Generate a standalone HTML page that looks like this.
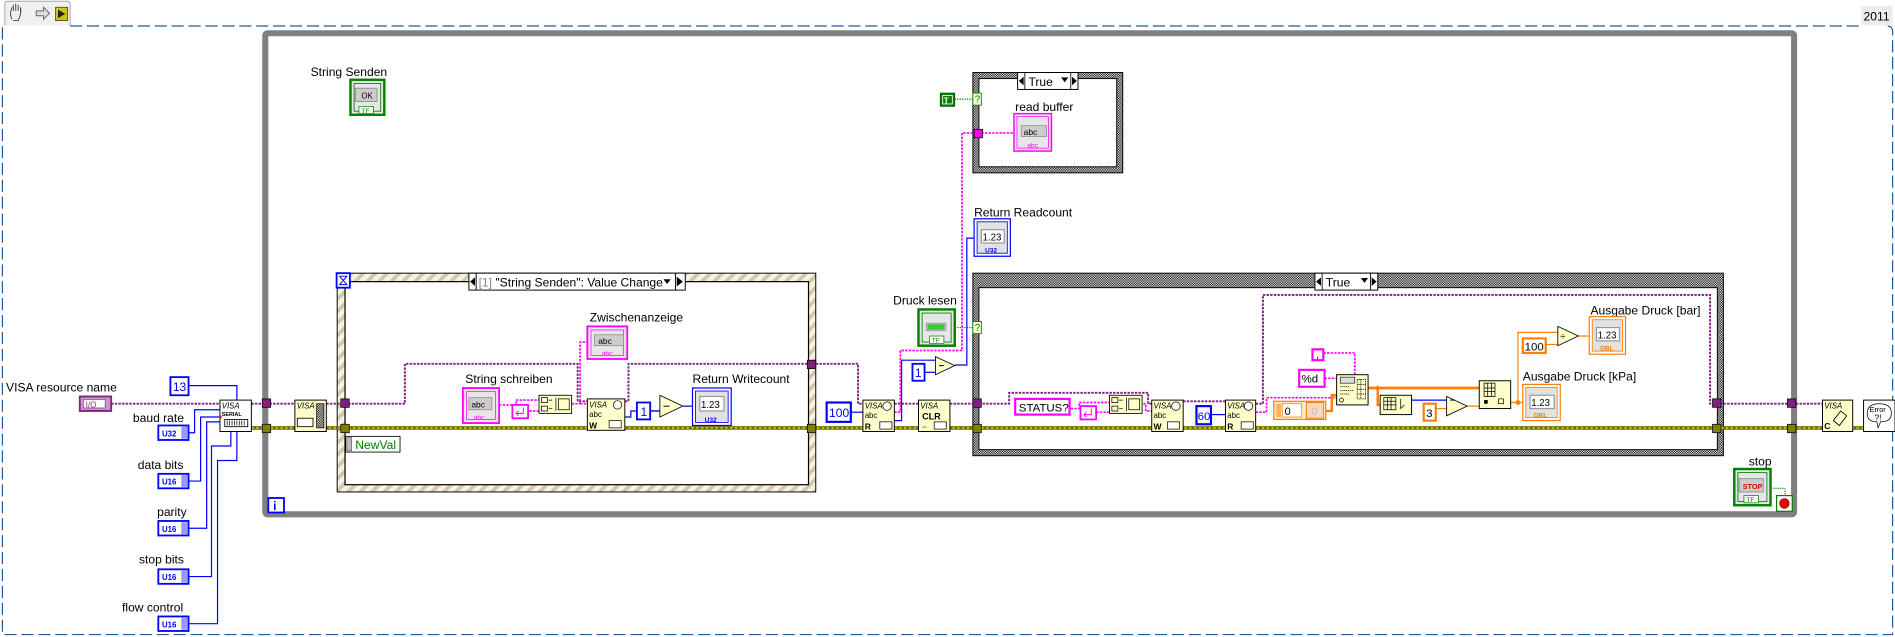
<!DOCTYPE html>
<html><head><meta charset="utf-8"><style>
html,body{margin:0;padding:0;background:#fff;overflow:hidden}
svg{display:block}
text{font-family:"Liberation Sans",sans-serif}
</style></head><body>
<svg width="1895" height="637" viewBox="0 0 1568 527" preserveAspectRatio="none" xmlns="http://www.w3.org/2000/svg">
<defs>
<pattern id="chk" width="2" height="2" patternUnits="userSpaceOnUse"><rect width="2" height="2" fill="#fff"/><rect width="1" height="1" fill="#000"/><rect x="1" y="1" width="1" height="1" fill="#000"/></pattern>
<pattern id="str" width="7" height="7" patternUnits="userSpaceOnUse" patternTransform="rotate(45)"><rect width="7" height="7" fill="#f6f3e2"/><rect width="3" height="7" fill="#cfc9aa"/></pattern>
</defs>
<rect width="1568" height="527" fill="#fff"/>

<!-- toolbar tab -->
<path d="M4,21 V3 Q4,1 6,1 H56 Q58,1 58,3 V21" fill="#f0f0f0" stroke="#a8a8a8" stroke-width="0.8"/>
<g fill="none" stroke="#444" stroke-width="0.8">
<path d="M10,16 Q8,12 9,9 L10,6 M11,9 V4 M13,9 V3 M15,9 V4 M17,10 V6 Q18,12 15,17 H11"/>
</g>
<path d="M30,9 H36 V6 L41,11 L36,16 V13 H30 Z" fill="#ddd" stroke="#666" stroke-width="0.8"/>
<rect x="46" y="6" width="10" height="11" fill="#c8c800" stroke="#333" stroke-width="0.6"/>
<path d="M48,8 L54,11.5 L48,15 Z" fill="#222"/>
<!-- 2011 tag -->
<rect x="1540" y="5" width="26" height="16" fill="#ececec"/>
<text x="1542" y="17" font-size="10">2011</text>
<!-- dashed border -->
<path d="M58,21.5 H1540 M1562,21.5 Q1566,22 1566,26 V525 H2 V21.5 H4" fill="none" stroke="#1f5d9a" stroke-width="1" stroke-dasharray="10,4"/>

<!-- while loop -->
<rect x="219.5" y="27.5" width="1265" height="398" fill="none" stroke="#808080" stroke-width="5" rx="2"/>
<rect x="222" y="412" width="13" height="12" fill="#fff" stroke="#00f" stroke-width="1.5"/>
<text x="226" y="422" font-size="10" fill="#00f" font-weight="bold">i</text>

<!-- event structure -->
<rect x="279" y="226" width="396" height="181" fill="url(#str)" stroke="#000" stroke-width="0.8"/>
<rect x="285.5" y="233" width="383.5" height="168" fill="#fff" stroke="#000" stroke-width="1"/>
<rect x="278.5" y="226" width="11" height="12" fill="#fff" stroke="#00f" stroke-width="1.5"/>
<path d="M281,228.5 H287 L284,232 L287,235.5 H281 L284,232 Z" fill="none" stroke="#00f" stroke-width="0.8"/>
<rect x="388" y="226" width="179" height="14" fill="#fff" stroke="#000" stroke-width="0.8"/>
<path d="M389,233 L393,229.5 V236.5 Z" fill="#000"/>
<path d="M394,226 V240 M559,226 V240" stroke="#000" stroke-width="0.8"/>
<text x="396" y="237" font-size="10"><tspan fill="#888">[1]</tspan> "String Senden": Value Change</text>
<path d="M549,231 H555 L552,235 Z" fill="#000"/>
<path d="M560,229 L565,233 L560,237 Z" fill="#000"/>
<rect x="286" y="361" width="45" height="13" fill="#fff" stroke="#000" stroke-width="0.7"/>
<rect x="287" y="362" width="4" height="11" fill="#bbb" stroke="#555" stroke-width="0.5"/>
<text x="294" y="371.5" font-size="10" fill="#008000">NewVal</text>

<!-- case structure 1 -->
<rect x="805" y="60" width="124" height="83" fill="url(#chk)" stroke="#000" stroke-width="0.8"/>
<rect x="810" y="65" width="114" height="73" fill="#fff" stroke="#000" stroke-width="0.8"/>
<rect x="842" y="60" width="50" height="14" fill="#fff" stroke="#000" stroke-width="0.8"/>
<path d="M843,67 L847,63.5 V70.5 Z M891,67 L887,63.5 V70.5 Z M884,64 H878 L881,68 Z" fill="#000"/>
<path d="M848,60 V74 M886,60 V74" stroke="#000" stroke-width="0.7"/>
<text x="851" y="71" font-size="10">True</text>

<!-- case structure 2 -->
<rect x="805" y="226" width="621" height="151" fill="url(#chk)" stroke="#000" stroke-width="0.8"/>
<rect x="810" y="238" width="611" height="134" fill="#fff" stroke="#000" stroke-width="0.8"/>
<rect x="1088" y="226" width="52" height="14" fill="#fff" stroke="#000" stroke-width="0.8"/>
<path d="M1089,233 L1093,229.5 V236.5 Z M1139,233 L1135,229.5 V236.5 Z M1132,230 H1126 L1129,234 Z" fill="#000"/>
<path d="M1094,226 V240 M1134,226 V240" stroke="#000" stroke-width="0.7"/>
<text x="1097" y="237" font-size="10">True</text>

<!-- ===== wires ===== -->
<!-- error cluster -->
<g fill="none">
<path d="M208,354 H1542" stroke="#6b6b00" stroke-width="3"/>
<path d="M208,354 H1542" stroke="#f2f200" stroke-width="1" stroke-dasharray="2,2"/>
</g>
<!-- VISA purple -->
<g fill="none" stroke="#7f1f7f" stroke-width="1.6" stroke-dasharray="2,1">
<path d="M92,334 H182"/>
<path d="M208,334 H244"/>
<path d="M270,334 H335 V301 H478 V332 H486"/>
<path d="M517,332 H520 V301 H710 V334 H714"/>
<path d="M740,334 H760"/>
<path d="M786,334 H835 V325 H950 V334 H953"/>
<path d="M973,332 H1014"/>
<path d="M1039,334 H1045 V244 H1415 V334 H1508"/>
</g>
<!-- blue ints -->
<g fill="none" stroke="#0000ff" stroke-width="1">
<path d="M156,319 H196 V331"/>
<path d="M156,358 H161 V339 H182"/>
<path d="M156,398 H166 V345 H182"/>
<path d="M156,437 H171 V349 H182"/>
<path d="M156,477 H175 V369 H191 V357"/>
<path d="M156,516 H180 V381 H196 V357"/>
<path d="M517,345 H522 V340 H546"/>
<path d="M538,340 H546"/>
<path d="M565,336 H573"/>
<path d="M704,341 H714"/>
<path d="M740,348 H746 V298 H774"/>
<path d="M765,308 H774"/>
<path d="M790,302 H800 V197 H806"/>
<path d="M1002,343 H1014"/>
<path d="M1168,331 H1197"/>
</g>
<!-- pink strings -->
<g fill="none" stroke="#ff00ff" stroke-width="1.4" stroke-dasharray="2,1">
<path d="M413,335 H427 V331 H446"/>
<path d="M438,340 H446"/>
<path d="M473,334 H480 V283 H486"/>
<path d="M480,334 H486"/>
<path d="M740,341 H745 V290 H796 V110 H839"/>
<path d="M886,338 H893 V333 H918"/>
<path d="M907,341 H918"/>
<path d="M934,334 H948 V340 H953"/>
<path d="M1039,341 H1048 V329 H1106"/>
<path d="M1096,313 H1106"/>
<path d="M1095,292 H1121 V310"/>
</g>
<!-- green booleans -->
<g fill="none" stroke="#008000" stroke-width="1" stroke-dasharray="1,1">
<path d="M790,82 H806"/>
<path d="M790,271 H806"/>
<path d="M1465,404 H1477 V410"/>
</g>
<!-- orange -->
<g fill="none" stroke="#ff7f00">
<path d="M1097,340 H1102 V327 H1106" stroke-width="2"/>
<path d="M1132,321 H1224" stroke-width="2.2"/>
<path d="M1140,321 V335 H1142" stroke-width="2"/>
<path d="M1188,338 H1197" stroke-width="1"/>
<path d="M1214,336 H1224" stroke-width="1"/>
<path d="M1250,333 H1260" stroke-width="1"/>
<path d="M1256,333 V275 H1289" stroke-width="1"/>
<path d="M1279,285 H1289" stroke-width="1"/>
<path d="M1306,278 H1315" stroke-width="1"/>
</g>
<circle cx="1140" cy="321" r="1.8" fill="#ff7f00"/>
<circle cx="1256" cy="333" r="2" fill="#ff7f00"/>

<!-- tunnels -->
<g stroke="#000" stroke-width="0.6">
<rect x="217" y="330" width="7" height="7" fill="#7f1f7f"/>
<rect x="217" y="351" width="7" height="7" fill="#808000"/>
<rect x="282" y="330" width="7" height="7" fill="#7f1f7f"/>
<rect x="282" y="351" width="7" height="7" fill="#808000"/>
<rect x="668" y="298" width="7" height="7" fill="#7f1f7f"/>
<rect x="668" y="351" width="7" height="7" fill="#808000"/>
<rect x="805" y="330" width="7" height="7" fill="#7f1f7f"/>
<rect x="805" y="351" width="7" height="7" fill="#808000"/>
<rect x="806" y="107" width="7" height="7" fill="#ff00ff"/>
<rect x="1417" y="330" width="7" height="7" fill="#7f1f7f"/>
<rect x="1417" y="351" width="7" height="7" fill="#808000"/>
<rect x="1479" y="330" width="7" height="7" fill="#7f1f7f"/>
<rect x="1479" y="351" width="7" height="7" fill="#808000"/>
</g>
<!-- selector terminals -->
<rect x="805" y="77" width="7" height="10" fill="#f4ffd0" stroke="#008000" stroke-width="0.7"/>
<text x="806.5" y="85" font-size="8" fill="#008000">?</text>
<rect x="805" y="266" width="7" height="10" fill="#f4ffd0" stroke="#008000" stroke-width="0.7"/>
<text x="806.5" y="274" font-size="8" fill="#008000">?</text>

<!-- ===== left controls ===== -->
<g font-size="10">
<text x="5" y="324">VISA resource name</text>
<text x="110" y="349">baud rate</text>
<text x="114" y="388">data bits</text>
<text x="130" y="427">parity</text>
<text x="115" y="466">stop bits</text>
<text x="101" y="506">flow control</text>
</g>
<rect x="66" y="328" width="26" height="12" fill="#c49ac4" stroke="#7f1f7f" stroke-width="1.5"/>
<rect x="69" y="330.5" width="18" height="7" fill="#fff" stroke="#7f1f7f" stroke-width="0.5"/>
<text x="71" y="337" font-size="6.5" fill="#7f1f7f">I/O</text>
<rect x="141" y="312" width="15" height="15" fill="#fff" stroke="#00f" stroke-width="1.5"/>
<text x="143" y="323.5" font-size="10" fill="#00f">13</text>
<g font-size="6.5" font-weight="bold" fill="#00f">
<rect x="131" y="352" width="25" height="12" fill="#fff" stroke="#00f" stroke-width="1.5"/><rect x="150" y="353" width="5" height="10" fill="#99f"/><text x="134" y="361">U32</text>
<rect x="131" y="392" width="25" height="12" fill="#fff" stroke="#00f" stroke-width="1.5"/><rect x="150" y="393" width="5" height="10" fill="#99f"/><text x="134" y="401">U16</text>
<rect x="131" y="431" width="25" height="12" fill="#fff" stroke="#00f" stroke-width="1.5"/><rect x="150" y="432" width="5" height="10" fill="#99f"/><text x="134" y="440">U16</text>
<rect x="131" y="471" width="25" height="12" fill="#fff" stroke="#00f" stroke-width="1.5"/><rect x="150" y="472" width="5" height="10" fill="#99f"/><text x="134" y="480">U16</text>
<rect x="131" y="510" width="25" height="12" fill="#fff" stroke="#00f" stroke-width="1.5"/><rect x="150" y="511" width="5" height="10" fill="#99f"/><text x="134" y="519">U16</text>
</g>

<!-- VISA serial config -->
<rect x="182" y="331" width="26" height="26" fill="#fff" stroke="#000" stroke-width="0.8"/>
<text x="183.5" y="338" font-size="6.5" font-style="italic">VISA</text>
<text x="183.5" y="344" font-size="4.5" font-weight="bold">SERIAL</text>
<rect x="186" y="347" width="19" height="6" fill="#fff" stroke="#000" stroke-width="0.7"/>
<path d="M188,348 V352 M190,348 V352 M192,348 V352 M194,348 V352 M196,348 V352 M198,348 V352 M200,348 V352 M202,348 V352" stroke="#000" stroke-width="0.6"/>
<circle cx="182.5" cy="345" r="1" fill="#f00"/>

<!-- VISA config/timeout node -->
<rect x="244" y="331" width="26" height="26" fill="#ffffcc" stroke="#000" stroke-width="0.8"/>
<text x="245.5" y="338" font-size="6.5" font-style="italic">VISA</text>
<rect x="246" y="346" width="13" height="7" fill="#fff" stroke="#000" stroke-width="0.7"/>
<rect x="262" y="334" width="6" height="20" fill="url(#chk)" stroke="#000" stroke-width="0.6"/>

<!-- String Senden control -->
<text x="257" y="63" font-size="10">String Senden</text>
<rect x="290" y="66" width="28" height="29" fill="#e6e6e6" stroke="#008000" stroke-width="2"/>
<rect x="293" y="69" width="22" height="23" fill="none" stroke="#008000" stroke-width="0.7"/>
<rect x="294" y="73" width="18" height="11" fill="#ccc" stroke="#888" stroke-width="0.7"/>
<text x="299" y="81.5" font-size="6.5">OK</text>
<rect x="297" y="88" width="12" height="6" fill="#fff" stroke="#008000" stroke-width="0.6"/>
<text x="299" y="93.5" font-size="5.5" fill="#008000">TF</text>

<!-- Zwischenanzeige -->
<text x="488" y="266" font-size="10">Zwischenanzeige</text>
<rect x="486" y="270" width="33" height="27" fill="#e6e6e6" stroke="#ff00ff" stroke-width="1.5"/>
<rect x="489" y="273" width="27" height="21" fill="none" stroke="#ff00ff" stroke-width="0.6"/>
<rect x="492" y="277" width="24" height="9" fill="#ccc" stroke="#888" stroke-width="0.6"/>
<text x="495" y="284.5" font-size="7">abc</text>
<text x="498" y="294" font-size="5.5" fill="#ff00ff">abc</text>

<!-- String schreiben -->
<text x="385" y="317" font-size="10">String schreiben</text>
<rect x="383" y="321" width="30" height="29" fill="#e6e6e6" stroke="#ff00ff" stroke-width="1.5"/>
<rect x="386" y="324" width="24" height="23" fill="none" stroke="#ff00ff" stroke-width="0.6"/>
<rect x="388" y="329" width="19" height="10" fill="#ccc" stroke="#888" stroke-width="0.6"/>
<text x="390" y="337" font-size="7">abc</text>
<text x="392" y="347" font-size="5.5" fill="#ff00ff">abc</text>
<!-- CR const -->
<rect x="424" y="335" width="13" height="11" fill="#fff" stroke="#ff00ff" stroke-width="1.5"/>
<path d="M433,337 V342 H427 M429,340 L427,342 L429,344" fill="none" stroke="#ff00ff" stroke-width="0.8"/>
<!-- concat -->
<rect x="446" y="327" width="27" height="15" fill="#ffffcc" stroke="#000" stroke-width="0.7"/>
<path d="M448,329 h5 v4 h-5 z M448,336 h5 v4 h-5 z M454,331 h3 M454,338 h3 M460,329 V340 M462,330 h9 v9 h-9 z" fill="none" stroke="#000" stroke-width="0.6"/>
<!-- VISA write -->
<rect x="486" y="330" width="31" height="26" fill="#ffffcc" stroke="#000" stroke-width="0.8"/>
<text x="487.5" y="337" font-size="6.5" font-style="italic">VISA</text>
<text x="487.5" y="345" font-size="6.5">abc</text>
<text x="487.5" y="354.5" font-size="7" font-weight="bold">W</text>
<rect x="504" y="348" width="10" height="6" fill="#fff" stroke="#000" stroke-width="0.6"/>
<circle cx="511" cy="335" r="3.5" fill="#fff" stroke="#000" stroke-width="0.6"/>
<!-- 1 const & subtract -->
<rect x="527" y="333" width="11" height="14" fill="#fff" stroke="#00f" stroke-width="1.5"/>
<text x="530" y="344" font-size="10" fill="#00f">1</text>
<path d="M546,327 L565,336 L546,345 Z" fill="#ffffcc" stroke="#000" stroke-width="0.7"/>
<path d="M549,336 h5" stroke="#000" stroke-width="0.8"/>
<!-- Return Writecount -->
<text x="573" y="317" font-size="10">Return Writecount</text>
<rect x="573" y="321" width="32" height="31" fill="#fff" stroke="#00f" stroke-width="1"/>
<rect x="575.5" y="323.5" width="27" height="26" fill="#e2e2e2" stroke="#00f" stroke-width="0.7"/>
<rect x="579" y="328" width="20" height="12" fill="#fff" stroke="#999" stroke-width="1"/>
<text x="580" y="337.5" font-size="8">1.23</text>
<text x="583" y="349" font-size="5.5" fill="#00f" font-weight="bold">U32</text>

<!-- 100 const -->
<rect x="684" y="333" width="20" height="16" fill="#fff" stroke="#00f" stroke-width="1.8"/>
<text x="686" y="345" font-size="10" fill="#00f">100</text>
<!-- VISA read -->
<rect x="714" y="331" width="26" height="26" fill="#ffffcc" stroke="#000" stroke-width="0.8"/>
<text x="715.5" y="338" font-size="6.5" font-style="italic">VISA</text>
<text x="715.5" y="346" font-size="6.5">abc</text>
<text x="715.5" y="355.5" font-size="7" font-weight="bold">R</text>
<rect x="728" y="349" width="10" height="6" fill="#fff" stroke="#000" stroke-width="0.6"/>
<circle cx="734" cy="336" r="3.5" fill="#fff" stroke="#000" stroke-width="0.6"/>
<!-- VISA CLR -->
<rect x="760" y="331" width="26" height="26" fill="#ffffcc" stroke="#000" stroke-width="0.8"/>
<text x="761.5" y="338" font-size="6.5" font-style="italic">VISA</text>
<text x="763" y="347" font-size="7.5" font-weight="bold">CLR</text>
<rect x="773" y="349" width="10" height="6" fill="#fff" stroke="#000" stroke-width="0.6"/>
<text x="762" y="355" font-size="6">⇔</text>

<!-- Druck lesen -->
<text x="739" y="252" font-size="10">Druck lesen</text>
<rect x="760" y="256" width="30" height="30" fill="#e6e6e6" stroke="#008000" stroke-width="2"/>
<rect x="763" y="259" width="24" height="24" fill="none" stroke="#008000" stroke-width="0.7"/>
<rect x="766" y="267" width="17" height="7" fill="#aaa"/>
<rect x="768" y="268.5" width="13" height="4" fill="#3c3"/>
<rect x="769" y="278" width="12" height="6" fill="#fff" stroke="#008000" stroke-width="0.6"/>
<text x="771" y="283.5" font-size="5.5" fill="#008000">TF</text>
<!-- 1 const subtract -->
<rect x="755" y="301" width="10" height="14" fill="#fff" stroke="#00f" stroke-width="1.5"/>
<text x="757" y="312" font-size="10" fill="#00f">1</text>
<path d="M774,295 L790,302.5 L774,310 Z" fill="#ffffcc" stroke="#000" stroke-width="0.7"/>
<path d="M777,302.5 h4" stroke="#000" stroke-width="0.8"/>

<!-- T const -->
<rect x="778" y="77" width="12" height="11" fill="#008000" stroke="#005000" stroke-width="0.6"/>
<rect x="780" y="79" width="8" height="7" fill="none" stroke="#fff" stroke-width="0.7"/>
<text x="781" y="85.5" font-size="6.5" fill="#fff" font-weight="bold">T</text>
<!-- read buffer -->
<text x="840" y="92" font-size="10">read buffer</text>
<rect x="839" y="94" width="31" height="31" fill="#e6e6e6" stroke="#ff00ff" stroke-width="1.2"/>
<rect x="841.5" y="96.5" width="26" height="26" fill="none" stroke="#ff00ff" stroke-width="0.6"/>
<rect x="845" y="104" width="21" height="9" fill="#ccc" stroke="#888" stroke-width="0.6"/>
<text x="847" y="111.5" font-size="7">abc</text>
<text x="850" y="122" font-size="5.5" fill="#ff00ff">abc</text>
<!-- Return Readcount -->
<text x="806" y="179" font-size="10">Return Readcount</text>
<rect x="806" y="181" width="30" height="31" fill="#fff" stroke="#00f" stroke-width="1"/>
<rect x="808.5" y="183.5" width="25" height="26" fill="#e2e2e2" stroke="#00f" stroke-width="0.7"/>
<rect x="812" y="190" width="19" height="11" fill="#fff" stroke="#999" stroke-width="1"/>
<text x="813" y="199" font-size="8">1.23</text>
<text x="815" y="209" font-size="5.5" fill="#00f" font-weight="bold">U32</text>

<!-- case 2 contents -->
<rect x="840" y="330" width="45" height="13" fill="#fff" stroke="#ff00ff" stroke-width="1.8"/>
<text x="843" y="340.5" font-size="9.5">STATUS?</text>
<rect x="894" y="336" width="13" height="11" fill="#fff" stroke="#ff00ff" stroke-width="1.5"/>
<path d="M903,338 V343 H897 M899,341 L897,343 L899,345" fill="none" stroke="#ff00ff" stroke-width="0.8"/>
<rect x="918" y="327" width="27" height="15" fill="#ffffcc" stroke="#000" stroke-width="0.7"/>
<path d="M920,329 h5 v4 h-5 z M920,336 h5 v4 h-5 z M926,331 h3 M926,338 h3 M932,329 V340 M934,330 h9 v9 h-9 z" fill="none" stroke="#000" stroke-width="0.6"/>
<rect x="953" y="331" width="26" height="26" fill="#ffffcc" stroke="#000" stroke-width="0.8"/>
<text x="954.5" y="338" font-size="6.5" font-style="italic">VISA</text>
<text x="954.5" y="346" font-size="6.5">abc</text>
<text x="954.5" y="355.5" font-size="7" font-weight="bold">W</text>
<rect x="966" y="349" width="10" height="6" fill="#fff" stroke="#000" stroke-width="0.6"/>
<circle cx="973" cy="336" r="3.5" fill="#fff" stroke="#000" stroke-width="0.6"/>
<rect x="990" y="336" width="12" height="15" fill="#fff" stroke="#00f" stroke-width="1.8"/>
<text x="991" y="347.5" font-size="9.5" fill="#00f">60</text>
<rect x="1014" y="331" width="25" height="26" fill="#ffffcc" stroke="#000" stroke-width="0.8"/>
<text x="1015.5" y="338" font-size="6.5" font-style="italic">VISA</text>
<text x="1015.5" y="346" font-size="6.5">abc</text>
<text x="1015.5" y="355.5" font-size="7" font-weight="bold">R</text>
<rect x="1027" y="349" width="10" height="6" fill="#fff" stroke="#000" stroke-width="0.6"/>
<circle cx="1033" cy="336" r="3.5" fill="#fff" stroke="#000" stroke-width="0.6"/>

<!-- scan from string area -->
<rect x="1086" y="289" width="9" height="9" fill="#fff" stroke="#ff00ff" stroke-width="1.8"/>
<text x="1089" y="296" font-size="8">,</text>
<rect x="1075" y="306" width="21" height="14" fill="#fff" stroke="#ff00ff" stroke-width="1.8"/>
<text x="1077" y="316.5" font-size="9.5">%d</text>
<rect x="1054" y="332" width="43" height="15" fill="#ffe8d0" stroke="#ff7f00" stroke-width="1"/>
<rect x="1056" y="334" width="4" height="11" fill="#ffb060"/>
<rect x="1061" y="334" width="16" height="11" fill="#fff" stroke="#ff7f00" stroke-width="0.6"/>
<text x="1063" y="343.5" font-size="9">0</text>
<rect x="1081" y="333" width="14" height="13" fill="#f8d8c0" stroke="#ff7f00" stroke-width="0.8"/>
<text x="1085" y="343.5" font-size="9" fill="#bbb">0</text>
<rect x="1106" y="310" width="26" height="25" fill="#ffffcc" stroke="#000" stroke-width="0.8"/>
<rect x="1109" y="312" width="12" height="5" fill="#ddd" stroke="#000" stroke-width="0.5"/>
<path d="M1109,320 h8 M1109,323 h8 M1109,326 h8 M1117,323 l3,0 M1123,314 h7 v16 h-7 z M1123,318 h7 M1123,322 h7 M1123,326 h7 M1126,314 v16" fill="none" stroke="#000" stroke-width="0.6" stroke-dasharray="1,0.6"/>
<circle cx="1110" cy="331" r="1.6" fill="none" stroke="#000" stroke-width="0.6"/>
<rect x="1142" y="327" width="26" height="16" fill="#ffffcc" stroke="#000" stroke-width="0.8"/>
<path d="M1145,329 h10 v10 h-10 z M1148,329 v10 M1151,329 v10 M1145,332 h10 M1145,335 h10 M1159,330 v8 l3,-3" fill="none" stroke="#000" stroke-width="0.6"/>
<rect x="1178" y="334" width="10" height="14" fill="#fff" stroke="#ff7f00" stroke-width="1.8"/>
<text x="1180" y="345" font-size="9.5">3</text>
<path d="M1197,328 L1214,336 L1197,344 Z" fill="#ffffcc" stroke="#000" stroke-width="0.7"/>
<path d="M1200,331 h4" stroke="#000" stroke-width="0.8"/>
<rect x="1224" y="315" width="26" height="23" fill="#ffffcc" stroke="#000" stroke-width="0.8"/>
<path d="M1228,317 h9 v11 h-9 z M1231,317 v11 M1234,317 v11 M1228,321 h9 M1228,324 h9" fill="none" stroke="#000" stroke-width="0.6"/>
<rect x="1240" y="330" width="4" height="4" fill="none" stroke="#000" stroke-width="0.6"/>
<rect x="1228" y="331" width="3" height="3" fill="#000"/>
<!-- 100 orange, divide -->
<rect x="1260" y="280" width="19" height="12" fill="#fff" stroke="#ff7f00" stroke-width="1.8"/>
<text x="1261.5" y="290" font-size="9.5">100</text>
<path d="M1289,270 L1306,278 L1289,286 Z" fill="#ffffcc" stroke="#000" stroke-width="0.7"/>
<text x="1291" y="281" font-size="8">÷</text>
<!-- Ausgabe bar -->
<text x="1316" y="260" font-size="10">Ausgabe Druck [bar]</text>
<rect x="1315" y="262" width="30" height="31" fill="#fff" stroke="#ff7f00" stroke-width="1"/>
<rect x="1317.5" y="264.5" width="25" height="26" fill="#e2e2e2" stroke="#ff7f00" stroke-width="0.7"/>
<rect x="1321" y="271" width="19" height="11" fill="#fff" stroke="#999" stroke-width="1"/>
<text x="1322" y="280" font-size="8">1.23</text>
<text x="1324" y="290" font-size="5.5" fill="#ff7f00" font-weight="bold">DBL</text>
<!-- Ausgabe kPa -->
<text x="1260" y="315" font-size="10">Ausgabe Druck [kPa]</text>
<rect x="1260" y="318" width="31" height="30" fill="#fff" stroke="#ff7f00" stroke-width="1"/>
<rect x="1262.5" y="320.5" width="26" height="25" fill="#e2e2e2" stroke="#ff7f00" stroke-width="0.7"/>
<rect x="1266" y="327" width="20" height="11" fill="#fff" stroke="#999" stroke-width="1"/>
<text x="1267" y="336" font-size="8">1.23</text>
<text x="1269" y="345.5" font-size="5.5" fill="#ff7f00" font-weight="bold">DBL</text>

<!-- VISA close & Error -->
<rect x="1508" y="331" width="25" height="26" fill="#ffffcc" stroke="#000" stroke-width="0.8"/>
<text x="1509.5" y="338" font-size="6.5" font-style="italic">VISA</text>
<text x="1509.5" y="355" font-size="7" font-weight="bold">C</text>
<path d="M1517,348 l6,-8 l5,4 l-6,8 z" fill="none" stroke="#000" stroke-width="0.7"/>
<rect x="1542" y="331" width="26" height="26" fill="#fff" stroke="#000" stroke-width="0.8"/>
<path d="M1555,334 q10,0 10,8 q0,7 -9,7 l-2,5 l-1,-5 q-8,0 -8,-7 q0,-8 10,-8 z" fill="#fff" stroke="#000" stroke-width="0.6"/>
<text x="1547" y="341" font-size="6">Error</text>
<text x="1551" y="348" font-size="7">?!</text>

<!-- stop -->
<text x="1447" y="385" font-size="10">stop</text>
<rect x="1435" y="388" width="30" height="30" fill="#e6e6e6" stroke="#008000" stroke-width="2"/>
<rect x="1438" y="391" width="24" height="24" fill="none" stroke="#008000" stroke-width="0.7"/>
<rect x="1439" y="396" width="20" height="11" fill="#ccc" stroke="#888" stroke-width="0.7"/>
<text x="1442" y="404.5" font-size="6" fill="#d00" font-weight="bold">STOP</text>
<rect x="1443" y="410" width="12" height="6" fill="#fff" stroke="#008000" stroke-width="0.6"/>
<text x="1445" y="415.5" font-size="5.5" fill="#008000">TF</text>
<rect x="1470" y="410" width="13" height="13" fill="#fff" stroke="#008000" stroke-width="1"/>
<circle cx="1476.5" cy="416.5" r="4" fill="#e00" stroke="#800" stroke-width="0.5"/>
</svg>
</body></html>
